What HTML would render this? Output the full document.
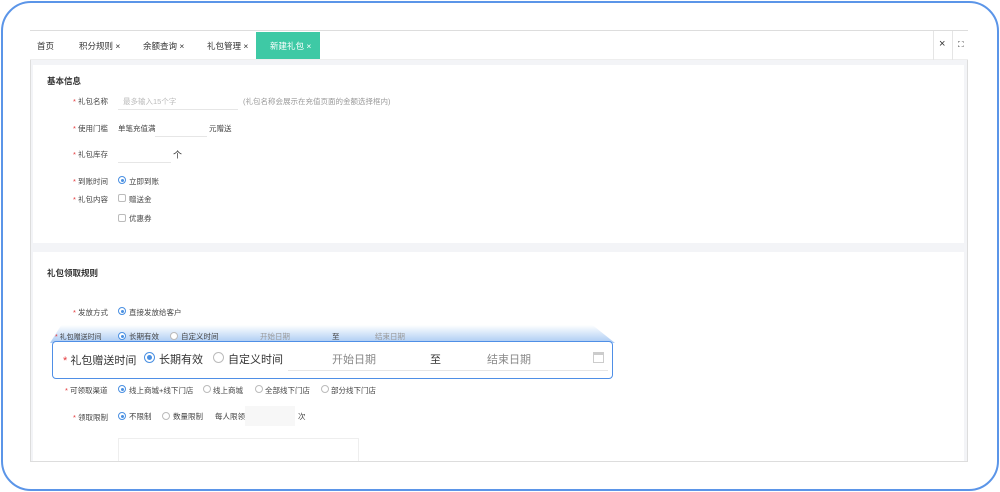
<!DOCTYPE html>
<html><head><meta charset="utf-8"><style>
*{margin:0;padding:0;box-sizing:border-box}
body{width:1000px;height:492px;background:#fff;position:relative;overflow:hidden;font-family:"Liberation Sans","Noto Sans CJK SC",sans-serif;color:#333}
.a{position:absolute;white-space:nowrap}
.outer{position:absolute;left:1px;top:1px;width:998px;height:490px;border:2px solid #5b95e8;border-radius:30px}
.panel{position:absolute;left:30px;top:30px;width:938px;height:432px;border:1px solid #ddd;background:#f3f4f7}
.tabs{position:absolute;left:30px;top:31px;width:938px;height:29px;background:#fff;border-bottom:1px solid #eee}
.card{position:absolute;background:#fff}
.s{font-size:7.5px;color:#444}
.st{color:#e4393c}
.r{position:absolute;width:8px;height:8px;border:1px solid #bbb;border-radius:50%;background:#fff}
.r.on{border-color:#4a90e2}
.r.on:after{content:"";position:absolute;left:1.5px;top:1.5px;width:3px;height:3px;border-radius:50%;background:#4a90e2}
.c{position:absolute;width:8px;height:8px;border:1px solid #bbb;border-radius:2px;background:#fff}
.ul{position:absolute;height:1px;background:#e6e6e6}
</style></head><body>
<div class="outer"></div>
<div class="panel"></div>
<div class="tabs"></div>
<div class="a" style="left:37px;top:40px;font-size:8.5px">首页</div>
<div class="a" style="left:79px;top:40px;font-size:8.5px">积分规则 ×</div>
<div class="a" style="left:143px;top:40px;font-size:8.5px">余额查询 ×</div>
<div class="a" style="left:207px;top:40px;font-size:8.5px">礼包管理 ×</div>
<div class="a" style="left:256px;top:32px;width:64px;height:27px;background:#3ec9a5;color:#fff;font-size:8.5px;padding:8px 0 0 14px">新建礼包 ×</div>
<div class="a" style="left:933px;top:31px;width:1px;height:29px;background:#e5e5e5"></div>
<div class="a" style="left:952px;top:31px;width:1px;height:29px;background:#e5e5e5"></div>
<div class="a" style="left:939px;top:38px;font-size:11px">×</div>
<div class="a" style="left:958px;top:40px;font-size:8px">⛶</div>

<div class="card" style="left:33px;top:65px;width:931px;height:178px"></div>
<div class="card" style="left:33px;top:252px;width:931px;height:209px"></div>

<div class="a" style="left:47px;top:75px;font-size:8.5px;font-weight:bold">基本信息</div>
<div class="a s" style="left:73px;top:96px"><span class="st">*</span> 礼包名称</div>
<div class="a s" style="left:123px;top:96px;color:#bbb">最多输入15个字</div>
<div class="ul" style="left:118px;top:109px;width:120px"></div>
<div class="a s" style="left:243px;top:96px;color:#999">(礼包名称会展示在充值页面的金额选择框内)</div>
<div class="a s" style="left:73px;top:123px"><span class="st">*</span> 使用门槛</div>
<div class="a s" style="left:118px;top:123px">单笔充值满</div>
<div class="ul" style="left:155px;top:136px;width:52px"></div>
<div class="a s" style="left:209px;top:123px">元赠送</div>
<div class="a s" style="left:73px;top:149px"><span class="st">*</span> 礼包库存</div>
<div class="ul" style="left:118px;top:162px;width:53px"></div>
<div class="a" style="left:173px;top:148px;font-size:9px">个</div>
<div class="a s" style="left:73px;top:176px"><span class="st">*</span> 到账时间</div>
<div class="r on" style="left:118px;top:176px"></div><div class="a s" style="left:129px;top:176px">立即到账</div>
<div class="a s" style="left:73px;top:194px"><span class="st">*</span> 礼包内容</div>
<div class="c" style="left:118px;top:194px"></div><div class="a s" style="left:129px;top:194px">赠送金</div>
<div class="c" style="left:118px;top:214px"></div><div class="a s" style="left:129px;top:213px">优惠券</div>

<div class="a" style="left:47px;top:267px;font-size:8.5px;font-weight:bold">礼包领取规则</div>
<div class="a s" style="left:73px;top:307px"><span class="st">*</span> 发放方式</div>
<div class="r on" style="left:118px;top:307px"></div><div class="a s" style="left:129px;top:307px">直接发放给客户</div>

<div class="a" style="left:50px;top:325px;width:565px;height:18px;background:linear-gradient(#fff,#a9c9f3);clip-path:polygon(2% 0,96% 0,100% 100%,0 100%)"></div>
<div class="a s" style="left:55px;top:332px;font-size:7px"><span class="st">*</span> 礼包赠送时间</div>
<div class="r on" style="left:118px;top:332px"></div><div class="a s" style="left:129px;top:331px">长期有效</div>
<div class="r" style="left:170px;top:332px"></div><div class="a s" style="left:181px;top:331px">自定义时间</div>
<div class="a s" style="left:260px;top:331px;color:#999">开始日期</div>
<div class="a s" style="left:332px;top:331px">至</div>
<div class="a s" style="left:375px;top:331px;color:#999">结束日期</div>

<div class="a" style="left:52px;top:341px;width:561px;height:38px;border:1.5px solid #4f8fe6;border-radius:4px;background:#fff"></div>
<div class="a" style="left:63px;top:352px;font-size:11px"><span class="st">*</span> 礼包赠送时间</div>
<div class="a" style="left:144px;top:352px;width:11px;height:11px;border:1px solid #4a90e2;border-radius:50%"><div style="position:absolute;left:2px;top:2px;width:5px;height:5px;border-radius:50%;background:#4a90e2"></div></div>
<div class="a" style="left:159px;top:351px;font-size:11px">长期有效</div>
<div class="a" style="left:213px;top:352px;width:11px;height:11px;border:1px solid #bbb;border-radius:50%"></div>
<div class="a" style="left:228px;top:351px;font-size:11px">自定义时间</div>
<div class="ul" style="left:288px;top:370px;width:320px"></div>
<div class="a" style="left:332px;top:351px;font-size:11px;color:#888">开始日期</div>
<div class="a" style="left:430px;top:351px;font-size:11px">至</div>
<div class="a" style="left:487px;top:351px;font-size:11px;color:#888">结束日期</div>
<div class="a" style="left:593px;top:352px;width:11px;height:11px;border:1px solid #ccc;border-top-width:3px"></div>

<div class="a s" style="left:65px;top:385px"><span class="st">*</span> 可领取渠道</div>
<div class="r on" style="left:118px;top:385px"></div><div class="a s" style="left:129px;top:385px">线上商城+线下门店</div>
<div class="r" style="left:203px;top:385px"></div><div class="a s" style="left:213px;top:385px">线上商城</div>
<div class="r" style="left:255px;top:385px"></div><div class="a s" style="left:265px;top:385px">全部线下门店</div>
<div class="r" style="left:321px;top:385px"></div><div class="a s" style="left:331px;top:385px">部分线下门店</div>
<div class="a s" style="left:73px;top:412px"><span class="st">*</span> 领取限制</div>
<div class="r on" style="left:118px;top:412px"></div><div class="a s" style="left:129px;top:411px">不限制</div>
<div class="r" style="left:162px;top:412px"></div><div class="a s" style="left:173px;top:411px">数量限制</div>
<div class="a s" style="left:215px;top:411px">每人限领</div>
<div class="a" style="left:245px;top:406px;width:50px;height:20px;background:#f7f7f7"></div>
<div class="a s" style="left:298px;top:411px">次</div>
<div class="a" style="left:118px;top:438px;width:241px;height:23px;border:1px solid #eee;border-bottom:none"></div>
</body></html>
